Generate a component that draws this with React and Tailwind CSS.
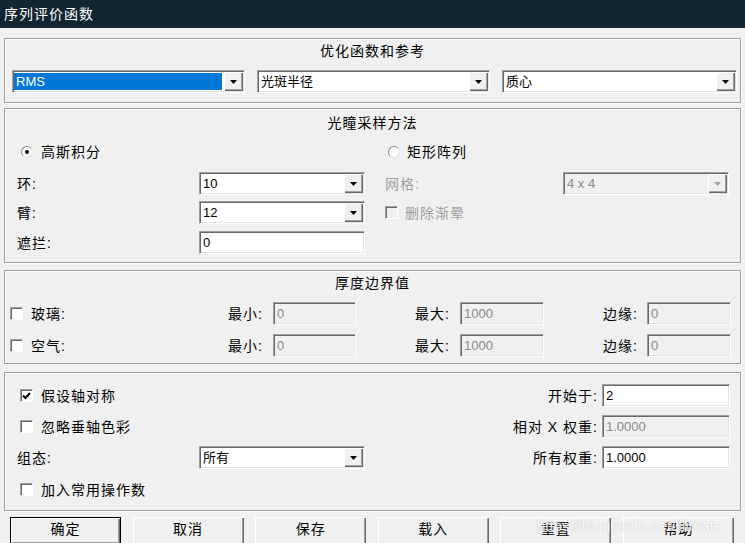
import React from "react";

const sunken =
  "border border-t-[#a0a0a0] border-l-[#a0a0a0] border-b-white border-r-white p-px shadow-[inset_1px_1px_0_#696969,inset_-1px_-1px_0_#e3e3e3]";

function Arrow({ off }) {
  return (
    <svg width="7" height="4" viewBox="0 0 7 4">
      <path d="M0 0h7L3.5 4z" fill={off ? "#a0a0a0" : "#000"} />
    </svg>
  );
}

function Combo({ className, value, selected, off }) {
  return (
    <div className={`flex h-[23px] box-border ${sunken} ${off ? "bg-[#f0f0f0]" : "bg-white"} ${className}`}>
      <div className="flex flex-1 items-center py-px pr-[2px]">
        <span
          className={`flex h-full flex-1 items-center px-[2px] text-[13px] tracking-normal ${
            selected ? "bg-[#0078d7] text-white" : off ? "text-[#8a8a8a]" : "text-black"
          }`}
        >
          {value}
        </span>
      </div>
      <div className="flex w-[19px] items-center justify-center bg-[#f0f0f0] shadow-[inset_1px_1px_0_#fff,inset_-1px_-1px_0_#696969,inset_-2px_-2px_0_#a0a0a0]">
        <Arrow off={off} />
      </div>
    </div>
  );
}

function Input({ className, value, off }) {
  return (
    <div
      className={`flex h-[23px] box-border items-center px-[3px] text-[13px] tracking-normal ${sunken} ${
        off ? "bg-[#f0f0f0] text-[#8a8a8a]" : "bg-white text-black"
      } ${className}`}
    >
      {value}
    </div>
  );
}

function Check({ on, off }) {
  return (
    <div
      className={`flex h-[13px] w-[13px] box-border items-center justify-center border border-t-[#a0a0a0] border-l-[#a0a0a0] border-b-white border-r-white shadow-[inset_1px_1px_0_#696969] ${
        off ? "bg-[#f0f0f0]" : "bg-white"
      }`}
    >
      {on && (
        <svg width="9" height="8" viewBox="0 0 9 8">
          <path d="M1 3.5l2.5 2.5L8 1" stroke="#000" strokeWidth="2" fill="none" />
        </svg>
      )}
    </div>
  );
}

function Radio({ on }) {
  return (
    <div className="flex h-[12px] w-[12px] box-border items-center justify-center rounded-full border border-t-[#8a8a8a] border-l-[#8a8a8a] border-b-[#e3e3e3] border-r-[#e3e3e3] bg-white">
      {on && <div className="h-[4px] w-[4px] rounded-full bg-black" />}
    </div>
  );
}

function Group({ className, title, children }) {
  return (
    <div
      className={`mx-[4px] box-border border border-[#a0a0a0] shadow-[inset_1px_1px_0_#fff,1px_1px_0_#fff] ${className}`}
    >
      {title && <div className="h-[16px] text-center leading-[16px]">{title}</div>}
      {children}
    </div>
  );
}

function Btn({ label, def }) {
  return (
    <div
      className={`flex h-[28px] w-[111px] box-border items-center justify-center bg-[#f0f0f0] ${
        def
          ? "border border-black shadow-[inset_1px_1px_0_#fff,inset_-1px_-1px_0_#696969,inset_-2px_-2px_0_#a0a0a0]"
          : "shadow-[inset_1px_1px_0_#fff,inset_-1px_-1px_0_#696969,inset_-2px_-2px_0_#a0a0a0]"
      }`}
    >
      <span className="pb-[4px]">{label}</span>
    </div>
  );
}

export default function App() {
  return (
    <div className="relative h-[543px] w-[745px] overflow-hidden bg-[#f0f0f0] font-['Liberation_Sans','Noto_Sans_CJK_SC',sans-serif] text-[14px] leading-[16px] tracking-[1px] text-black">
      <div className="flex h-[28px] items-center bg-[#102631] pl-[4px] text-white">序列评价函数</div>

      {/* 优化函数和参考 */}
      <Group className="mt-[10px] h-[65px] pt-[4px]" title="优化函数和参考">
        <div className="mt-[11px] flex gap-[12px] pl-[7px]">
          <Combo className="w-[233px]" value="RMS" selected />
          <Combo className="w-[233px]" value="光斑半径" />
          <Combo className="w-[235px]" value="质心" />
        </div>
      </Group>

      {/* 光瞳采样方法 */}
      <Group className="mt-[5px] h-[155px] pt-[6px]" title="光瞳采样方法">
        <div className="mt-[13px] flex h-[16px] items-center pl-[16px]">
          <div className="flex w-[367px] items-center gap-[8px]">
            <Radio on />
            <span>高斯积分</span>
          </div>
          <div className="flex items-center gap-[7px]">
            <Radio />
            <span>矩形阵列</span>
          </div>
        </div>
        <div className="mt-[12px] flex items-center pl-[12px]">
          <span className="w-[182px]">环:</span>
          <Combo className="w-[166px]" value="10" />
          <span className="ml-[20px] w-[178px] text-[#a0a0a0]">网格:</span>
          <Combo className="w-[166px]" value="4 x 4" off />
        </div>
        <div className="mt-[6px] flex items-center pl-[12px]">
          <span className="w-[182px]">臂:</span>
          <Combo className="w-[166px]" value="12" />
          <div className="ml-[20px] flex items-center gap-[7px] text-[#a0a0a0]">
            <Check off />
            <span>删除渐晕</span>
          </div>
        </div>
        <div className="mt-[7px] flex items-center pl-[12px]">
          <span className="w-[182px]">遮拦:</span>
          <Input className="w-[166px]" value="0" />
        </div>
      </Group>

      {/* 厚度边界值 */}
      <Group className="mt-[7px] h-[94px] pt-[4px]" title="厚度边界值">
        {[
          ["玻璃:", "mt-[11px]"],
          ["空气:", "mt-[9px]"],
        ].map(([name, mt]) => (
          <div key={name} className={`flex items-center pl-[5px] ${mt}`}>
            <div className="flex w-[218px] items-center gap-[8px]">
              <Check />
              <span>{name}</span>
            </div>
            <span className="w-[45px]">最小:</span>
            <Input className="w-[83px]" value="0" off />
            <span className="ml-[59px] w-[45px]">最大:</span>
            <Input className="w-[84px]" value="1000" off />
            <span className="ml-[59px] w-[44px]">边缘:</span>
            <Input className="w-[84px]" value="0" off />
          </div>
        ))}
      </Group>

      {/* 其它 */}
      <Group className="mt-[8px] flex h-[139px] flex-col gap-[8px] pt-[11px]">
        <div className="flex h-[23px] items-center">
          <div className="flex w-[360px] items-center gap-[8px] pl-[15px]">
            <Check on />
            <span>假设轴对称</span>
          </div>
          <div className="flex flex-1 items-center justify-end gap-[4px] pr-[10px]">
            <span>开始于:</span>
            <Input className="w-[128px]" value="2" />
          </div>
        </div>
        <div className="flex h-[23px] items-center">
          <div className="flex w-[360px] items-center gap-[8px] pl-[15px]">
            <Check />
            <span>忽略垂轴色彩</span>
          </div>
          <div className="flex flex-1 items-center justify-end gap-[4px] pr-[10px]">
            <span>相对 X 权重:</span>
            <Input className="w-[128px]" value="1.0000" off />
          </div>
        </div>
        <div className="flex h-[23px] items-center">
          <div className="flex w-[360px] items-center pl-[12px]">
            <span className="w-[182px]">组态:</span>
            <Combo className="w-[166px]" value="所有" />
          </div>
          <div className="flex flex-1 items-center justify-end gap-[4px] pr-[10px]">
            <span>所有权重:</span>
            <Input className="w-[128px]" value="1.0000" />
          </div>
        </div>
        <div className="mt-px flex h-[23px] items-center gap-[8px] pl-[15px]">
          <Check />
          <span>加入常用操作数</span>
        </div>
      </Group>

      <div className="mt-[6px] flex w-[734px] justify-between pl-[10px]">
        <Btn label="确定" def />
        <Btn label="取消" />
        <Btn label="保存" />
        <Btn label="载入" />
        <Btn label="重置" />
        <Btn label="帮助" />
      </div>

      <div className="absolute left-[537px] top-[518px] text-[15px] tracking-normal text-white opacity-80 [text-shadow:0_0_1px_#999]">
        https://blog.csdn.net/lllimate
      </div>
    </div>
  );
}
